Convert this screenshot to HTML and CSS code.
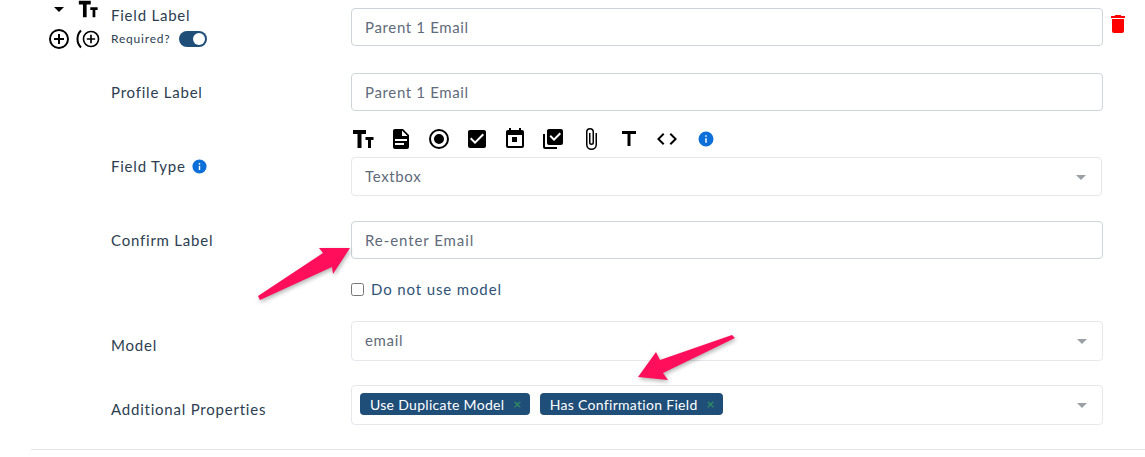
FILE: index.html
```html
<!DOCTYPE html>
<html lang="en">
<head>
<meta charset="utf-8">
<title>Field editor</title>
<link rel="stylesheet" href="styles.css">
</head>
<body>
<svg class="sprite" width="0" height="0">
  <symbol id="i-size" viewBox="0 0 24 24"><path d="M2,3V7H6.5V21H10.5V7H15V3H2Z M14.5,10V13H17V21H20V13H22.5V10H14.5Z"/></symbol>
  <symbol id="i-file" viewBox="0 0 24 24"><path d="M13,9H18.5L13,3.5V9M6,2H14L20,8V20A2,2 0 0,1 18,22H6C4.89,22 4,21.1 4,20V4C4,2.89 4.89,2 6,2M15,18V16H6V18H15M18,14V12H6V14H18Z"/></symbol>
  <symbol id="i-radio" viewBox="0 0 24 24"><path d="M12,20A8,8 0 0,1 4,12A8,8 0 0,1 12,4A8,8 0 0,1 20,12A8,8 0 0,1 12,20M12,2A10,10 0 0,0 2,12A10,10 0 0,0 12,22A10,10 0 0,0 22,12A10,10 0 0,0 12,2M12,7A5,5 0 0,0 7,12A5,5 0 0,0 12,17A5,5 0 0,0 17,12A5,5 0 0,0 12,7Z"/></symbol>
  <symbol id="i-check" viewBox="0 0 24 24"><path d="M10,17L5,12L6.41,10.58L10,14.17L17.59,6.58L19,8M19,3H5C3.89,3 3,3.89 3,5V19A2,2 0 0,0 5,21H19A2,2 0 0,0 21,19V5C21,3.89 20.1,3 19,3Z"/></symbol>
  <symbol id="i-cal" viewBox="0 0 24 24"><path d="M9,10H14V15H9M19,19H5V8H19M19,3H18V1H16V3H8V1H6V3H5C3.89,3 3,3.9 3,5V19A2,2 0 0,0 5,21H19A2,2 0 0,0 21,19V5A2,2 0 0,0 19,3Z"/></symbol>
  <symbol id="i-multi" viewBox="0 0 24 24"><path d="M22,16A2,2 0 0,1 20,18H8C6.89,18 6,17.1 6,16V4C6,2.89 6.89,2 8,2H20A2,2 0 0,1 22,4V16M16,20V22H4A2,2 0 0,1 2,20V7H4V20H16M13,14L20,7L18.59,5.59L13,11.17L9.91,8.09L8.5,9.5L13,14Z"/></symbol>
  <symbol id="i-clip" viewBox="0 0 24 24"><path d="M16.5,6V17.5A4,4 0 0,1 12.5,21.5A4,4 0 0,1 8.5,17.5V5A2.5,2.5 0 0,1 11,2.5A2.5,2.5 0 0,1 13.5,5V15.5A1,1 0 0,1 12.5,16.5A1,1 0 0,1 11.5,15.5V6H10V15.5A2.5,2.5 0 0,0 12.5,18A2.5,2.5 0 0,0 15,15.5V5A4,4 0 0,0 11,1A4,4 0 0,0 7,5V17.5A5.5,5.5 0 0,0 12.5,23A5.5,5.5 0 0,0 18,17.5V6H16.5Z"/></symbol>
  <symbol id="i-title" viewBox="0 0 24 24"><path d="M5,4V7H10.5V19H13.5V7H19V4H5Z"/></symbol>
  <symbol id="i-code" viewBox="0 0 24 24"><path d="M14.6,16.6L19.2,12L14.6,7.4L16,6L22,12L16,18L14.6,16.6M9.4,16.6L4.8,12L9.4,7.4L8,6L2,12L8,18L9.4,16.6Z"/></symbol>
  <symbol id="i-info" viewBox="0 0 24 24"><path d="M13,9H11V7H13M13,17H11V11H13M12,2A10,10 0 0,0 2,12A10,10 0 0,0 12,22A10,10 0 0,0 22,12A10,10 0 0,0 12,2Z"/></symbol>
  <symbol id="i-plus" viewBox="0 0 24 24"><path d="M12,20C7.59,20 4,16.41 4,12C4,7.59 7.59,4 12,4C16.41,4 20,7.59 20,12C20,16.41 16.41,20 12,20M12,2A10,10 0 0,0 2,12A10,10 0 0,0 12,22A10,10 0 0,0 22,12A10,10 0 0,0 12,2M13,7H11V11H7V13H11V17H13V13H17V11H13V7Z"/></symbol>
  <symbol id="i-trash" viewBox="0 0 24 24"><path d="M19,4H15.5L14.5,3H9.5L8.5,4H5V6H19V4M6,19A2,2 0 0,0 8,21H16A2,2 0 0,0 18,19V7H6V19Z"/></symbol>
</svg>

<main class="form">
  <div class="row row-first">
    <div class="handle">
      <div class="handle-line handle-top">
        <span class="caret"></span>
        <svg class="icon icon-22"><use href="#i-size"/></svg>
      </div>
      <div class="handle-line">
        <svg class="icon"><use href="#i-plus"/></svg>
        <svg class="icon-dup" viewBox="0 0 26 24"><path d="M6 3.5A12 12 0 0 0 6 20.5" fill="none" stroke="#000" stroke-width="2"/><use href="#i-plus" x="6" y="2" width="20" height="20"/></svg>
      </div>
    </div>
    <div class="label label-stack">
      <span>Field Label</span>
      <span class="required">Required? <span class="switch"><span class="knob"></span></span></span>
    </div>
    <div class="field"><div class="control">Parent 1 Email</div></div>
    <svg class="icon trash"><use href="#i-trash"/></svg>
  </div>

  <div class="row row-profile">
    <div class="handle"></div>
    <div class="label">Profile Label</div>
    <div class="field"><div class="control">Parent 1 Email</div></div>
  </div>

  <div class="row row-type">
    <div class="handle"></div>
    <div class="label label-type">Field Type <svg class="icon info"><use href="#i-info"/></svg></div>
    <div class="field field-narrow">
      <div class="type-icons">
        <svg class="icon"><use href="#i-size"/></svg>
        <svg class="icon"><use href="#i-file"/></svg>
        <svg class="icon"><use href="#i-radio"/></svg>
        <svg class="icon"><use href="#i-check"/></svg>
        <svg class="icon"><use href="#i-cal"/></svg>
        <svg class="icon"><use href="#i-multi"/></svg>
        <svg class="icon"><use href="#i-clip"/></svg>
        <svg class="icon"><use href="#i-title"/></svg>
        <svg class="icon"><use href="#i-code"/></svg>
        <svg class="icon info-lg"><use href="#i-info"/></svg>
      </div>
      <div class="control select light">Textbox<span class="arrow"></span></div>
    </div>
  </div>

  <div class="row row-confirm">
    <div class="handle"></div>
    <div class="label">Confirm Label</div>
    <div class="field">
      <div class="control strong">Re-enter Email</div>
      <label class="check"><input type="checkbox"> Do not use model</label>
    </div>
  </div>

  <div class="row row-model">
    <div class="handle"></div>
    <div class="label label-low">Model</div>
    <div class="field"><div class="control select tall light">email<span class="arrow"></span></div></div>
  </div>

  <div class="row row-props">
    <div class="handle"></div>
    <div class="label label-low">Additional Properties</div>
    <div class="field">
      <div class="control select tall light chips">
        <span class="chip">Use Duplicate Model<span class="chip-x">×</span></span>
        <span class="chip">Has Confirmation Field<span class="chip-x">×</span></span>
        <span class="arrow"></span>
      </div>
    </div>
  </div>
  <hr class="rule">
</main>

<svg class="annotations" viewBox="0 0 1145 457" width="1145" height="457">
  <polygon points="350,248 319,248 323,253 258,296 260,300 332,267 333,274"/>
  <polygon points="638,377 656,352 660,360 732,335 735,338 663,373 668,380"/>
</svg>
</body>
</html>
```

FILE: styles.css
```css
* { box-sizing: border-box; }

html, body { margin: 0; padding: 0; }

body {
  width: 1145px;
  height: 457px;
  overflow: hidden;
  position: relative;
  background: #fff;
  color: #2c3e50;
  font-family: "Lato", "Liberation Sans", sans-serif;
  font-size: 15px;
  letter-spacing: 0.78px;
}

.sprite { position: absolute; }

.form { padding: 8px 0 0 31px; }

.row { display: flex; align-items: center; }
.row-first { height: 38px; margin-bottom: 27px; align-items: flex-start; }
.row-profile { margin-bottom: 17px; }
.row-type { margin-bottom: 25px; align-items: flex-start; }
.row-confirm { margin-bottom: 22px; align-items: flex-start; }
.row-model { margin-bottom: 24px; }
.row-props { margin-bottom: 24px; }

.handle { width: 80px; flex: none; }
.label { width: 240px; flex: none; line-height: 20px; }
.label-low { padding-top: 8px; }
.label-type { display: flex; align-items: center; gap: 5px; padding-top: 28px; }
.row-confirm .label { padding-top: 9px; }

.label-stack { display: flex; flex-direction: column; gap: 4px; margin-top: -3px; }
.required { display: flex; align-items: center; gap: 8px; font-size: 12px; letter-spacing: 0.8px; }

.switch {
  width: 28px;
  height: 16px;
  border-radius: 8px;
  background: #1f4e79;
  display: flex;
  justify-content: flex-end;
  align-items: center;
  padding: 0 2px;
}
.knob { width: 12px; height: 12px; border-radius: 50%; background: #fff; }

.handle-line {
  display: flex;
  align-items: center;
  gap: 4px;
  padding-left: 16px;
  height: 22px;
}
.handle-top { gap: 13px; padding-left: 23px; margin-top: -10px; margin-bottom: 8px; }
.caret {
  width: 0;
  height: 0;
  border-left: 5px solid transparent;
  border-right: 5px solid transparent;
  border-top: 5px solid #000;
}

.icon { width: 24px; height: 24px; fill: #000; flex: none; }
.icon-22 { width: 22px; height: 22px; }
.icon-dup { width: 26px; height: 24px; fill: #000; flex: none; }
.info { width: 17px; height: 17px; fill: #0d6fd8; }
.trash { fill: #f00; margin-left: 3px; margin-top: 4px; }

.field { width: 752px; flex: none; }
.field-narrow { width: 751px; }

.control {
  position: relative;
  height: 38px;
  border: 1px solid #ced4da;
  border-radius: 4px;
  padding: 0 13px;
  display: flex;
  align-items: center;
  color: #5f6b7a;
  background: #fff;
  letter-spacing: 0.65px;
}
.strong { letter-spacing: 0.93px; }
.light { border-color: #e6e8eb; }
.select { height: 39px; padding-bottom: 2px; }
.select.tall { height: 40px; }

.arrow {
  position: absolute;
  right: 15px;
  top: 50%;
  margin-top: -2px;
  width: 0;
  height: 0;
  border-left: 5px solid transparent;
  border-right: 5px solid transparent;
  border-top: 5px solid #9aa0a6;
}

.type-icons {
  display: flex;
  align-items: center;
  gap: 14px;
  height: 22px;
  margin-bottom: 7px;
}
.info-lg { width: 18px; height: 18px; fill: #0d6fd8; margin-left: 4px; }

.check {
  display: flex;
  align-items: center;
  gap: 7px;
  margin-top: 20px;
  height: 20px;
  color: #2f5478;
  letter-spacing: 0.87px;
}
.check input { margin: 0; width: 13px; height: 13px; }

.chips { gap: 10px; padding-left: 8px; }
.chip {
  display: inline-flex;
  align-items: center;
  justify-content: space-between;
  height: 22px;
  padding: 0 8px 0 10px;
  gap: 9px;
  border-radius: 4px;
  background: #1f4e79;
  color: #fff;
  font-size: 14px;
  letter-spacing: 0.3px;
}
.chip-x { color: #2f8a63; font-size: 14px; font-weight: 700; line-height: 1; }

.rule { margin: 0; border: 0; border-top: 1px solid #e3e5e8; }

.annotations {
  position: absolute;
  left: 0;
  top: 0;
  pointer-events: none;
  fill: #ff0f5b;
  filter: drop-shadow(1px 2px 2px rgba(0, 0, 0, 0.3));
}
```
